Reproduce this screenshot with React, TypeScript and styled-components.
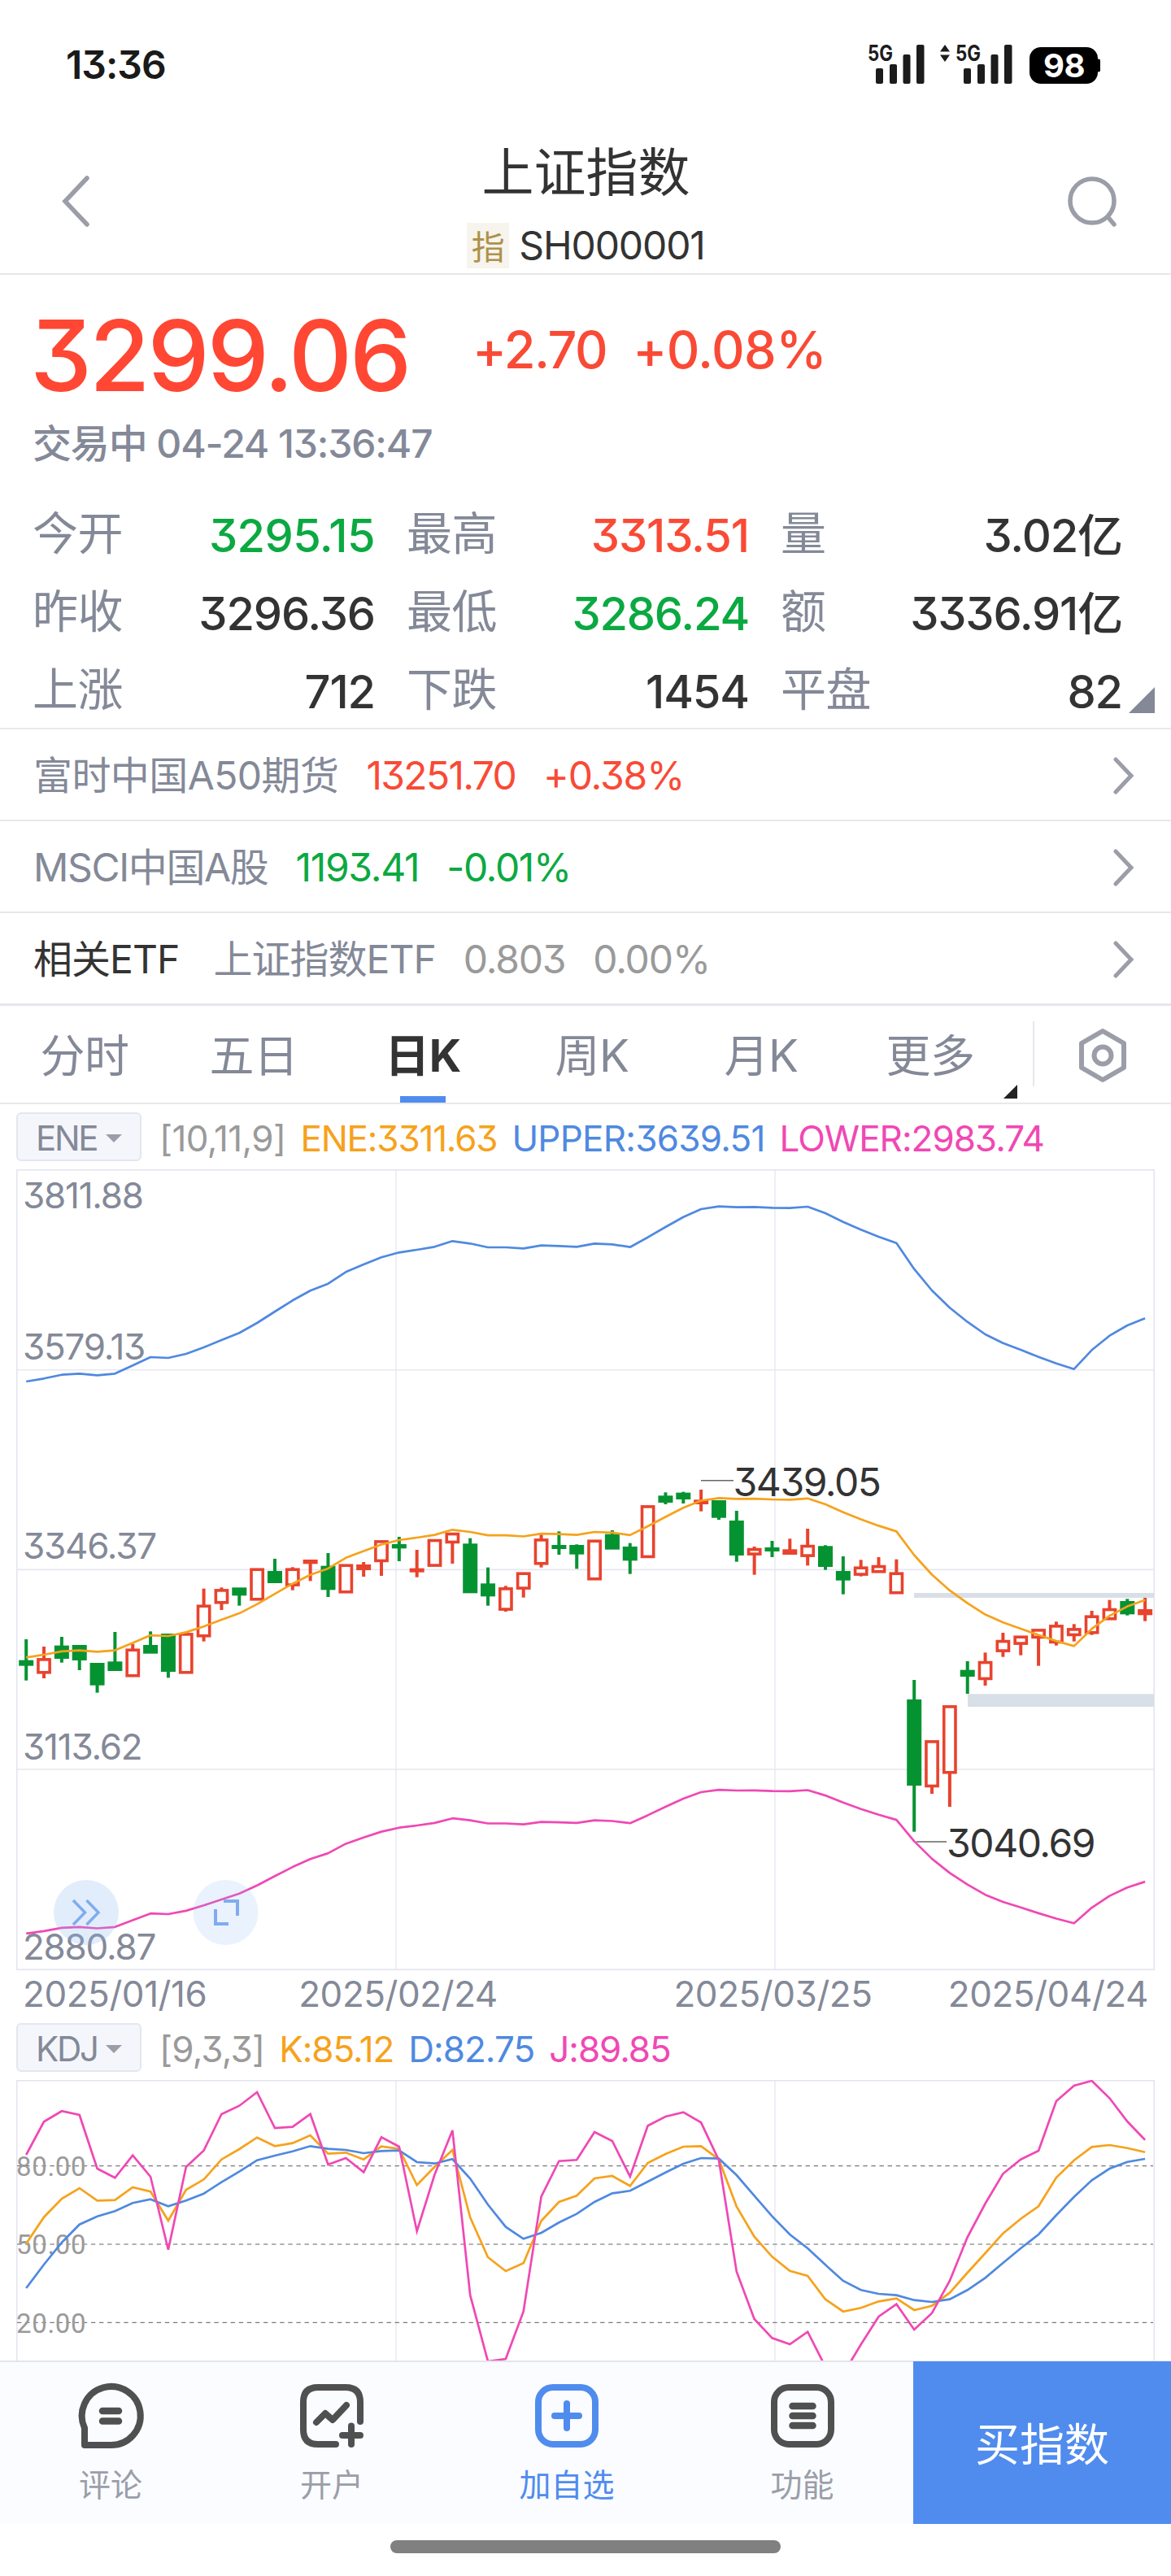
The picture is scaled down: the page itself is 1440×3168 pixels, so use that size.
import React from 'react';
import styled, { createGlobalStyle } from 'styled-components';

const GlobalStyle = createGlobalStyle`
  * { box-sizing: border-box; }
  body {
    margin: 0;
    background: #fff;
    color: #333;
    font-family: Inter, "Noto Sans CJK SC", sans-serif;
    font-feature-settings: "cv09" 1;
  }
`;

const RED = '#f94a36';
const GREEN = '#0ba941';
const MUTED = '#848998';
const ICON = '#9b9ea9';
const BLUE = '#508cee';
const LINE_BLUE = '#4f89e0';
const LINE_ORANGE = '#f6a21c';
const LINE_PINK = '#f048b4';
const CANDLE_RED = '#e8432e';
const CANDLE_GREEN = '#059332';

/* ---------- shared ---------- */

const Screen = styled.div`
  width: 1440px;
  height: 3168px;
  display: flex;
  flex-direction: column;
  overflow: hidden;
  background: #fff;
`;

const Txt = styled.span<{ $size: number; $color?: string; $weight?: number; $track?: number }>`
  font-size: ${(p) => p.$size}px;
  font-weight: ${(p) => p.$weight ?? 400};
  color: ${(p) => p.$color ?? '#333'};
  letter-spacing: ${(p) => p.$track ?? -0.02}em;
  white-space: nowrap;
`;

/* ---------- status bar ---------- */

const StatusBar = styled.div`
  height: 158px;
  padding: 0 80px 0 81px;
  display: flex;
  align-items: center;
  justify-content: space-between;
`;

const StatusIcons = styled.svg`
  width: 300px;
  height: 60px;
  display: block;
`;

const Signal = ({ x }: { x: number }) => (
  <g fill="#1c1c1c">
    <text x={x - 1} y={26} fontSize="27" fontWeight="700" textLength="31" lengthAdjust="spacingAndGlyphs">5G</text>
    <rect x={x + 9} y={35} width="9" height="19" rx="2" />
    <rect x={x + 26} y={30} width="9" height="24" rx="2" />
    <rect x={x + 42.5} y={18} width="9" height="36" rx="2" />
    <rect x={x + 59} y={6} width="9.5" height="48" rx="2" />
  </g>
);

/* ---------- title bar ---------- */

const TitleBar = styled.header`
  height: 180px;
  padding: 0 66px 0 76px;
  display: flex;
  align-items: center;
  justify-content: space-between;
  border-bottom: 2px solid #e7e8ea;
`;

const TitleStack = styled.div`
  display: flex;
  flex-direction: column;
  align-items: center;
  align-self: flex-start;
  padding: 12px 0 0 17px;
`;

const Title = styled.h1`
  margin: 0 0 20px;
  font-size: 64px;
  font-weight: 400;
  line-height: 84px;
`;

const CodeRow = styled.div`
  display: flex;
  align-items: center;
  gap: 12px;
  height: 56px;
  line-height: 54px;
`;

const Tag = styled.span`
  width: 52px;
  height: 56px;
  padding-top: 4px;
  display: grid;
  place-items: center;
  background: #f7f4ed;
  color: #ad924a;
  font-size: 41px;
  line-height: 52px;
`;

/* ---------- quote ---------- */

const Quote = styled.section`
  position: relative;
  height: 559px;
  padding: 29px 60px 0 40px;
  border-bottom: 2px solid #e7e8ea;
`;

const PriceRow = styled.div`
  display: flex;
  height: 140px;
  margin-left: -3px;
`;

const Price = styled.span`
  width: 467px;
  margin-right: 77px;
  font-size: 121px;
  font-weight: 500;
  line-height: 140px;
  letter-spacing: -0.0253em;
  color: #ff4733;
`;

const Change = styled(Txt)`
  line-height: 127px;
  margin-right: 32px;
`;

const Stamp = styled.div`
  height: 78px;
  margin-bottom: 23px;
  line-height: 78px;
  white-space: nowrap;
`;

const Stats = styled.div`
  display: grid;
  grid-template-columns: 421px 421px 420px;
  column-gap: 39px;
`;

const Stat = styled.div`
  height: 96px;
  display: flex;
  justify-content: space-between;
  line-height: 96px;
`;

const StatValue = styled(Txt)`
  padding-top: 3px;
`;

const ExpandCorner = styled.svg`
  position: absolute;
  right: 20px;
  bottom: 18px;
`;

/* ---------- related rows ---------- */

const LinkRow = styled.div<{ $strong?: boolean }>`
  height: ${(p) => (p.$strong ? 114 : 113)}px;
  padding: 2px 44px 0 41px;
  display: flex;
  align-items: center;
  gap: 34px;
  line-height: 60px;
  border-bottom: ${(p) => (p.$strong ? '3px solid #e5e7ef' : '2px solid #e7e8ea')};
`;

const Chevron = styled.svg`
  margin-left: auto;
`;

const Gapped = styled(Txt)`
  margin-right: 8px;
`;

/* ---------- period tabs ---------- */

const Tabs = styled.nav`
  height: 121px;
  display: flex;
  border-bottom: 2px solid #e7e8ea;
`;

const Tab = styled.div<{ $active?: boolean }>`
  position: relative;
  width: 208px;
  line-height: 122px;
  text-align: center;
  font-size: 55px;
  letter-spacing: -0.01em;
  font-weight: ${(p) => (p.$active ? 700 : 400)};
  color: ${(p) => (p.$active ? '#333' : MUTED)};
  &::after {
    content: '';
    display: ${(p) => (p.$active ? 'block' : 'none')};
    position: absolute;
    left: 76px;
    bottom: 0;
    width: 56px;
    height: 8px;
    background: ${BLUE};
  }
`;

const MoreCorner = styled.svg`
  position: absolute;
  right: -3px;
  bottom: 5px;
`;

const TabDivider = styled.div`
  width: 2px;
  height: 80px;
  margin: 19px 0 0 22px;
  background: #e6e7ee;
`;

const SettingsIcon = styled.svg`
  margin: 26px 0 0 52px;
`;

/* ---------- indicators ---------- */

const IndicatorBar = styled.div<{ $height: number; $top: number }>`
  height: ${(p) => p.$height}px;
  padding: ${(p) => p.$top}px 0 0 20px;
  display: flex;
  align-items: flex-start;
  gap: 18px;
  line-height: 64px;
`;

const Picker = styled.div`
  width: 154px;
  height: 60px;
  margin-right: 4px;
  padding: 3px 22px 0 22px;
  display: flex;
  align-items: center;
  justify-content: space-between;
  background: #f5f6fb;
  border: 2px solid #e4e6f0;
  border-radius: 6px;
  line-height: 54px;
`;

const Caret = () => (
  <svg width="20" height="10" viewBox="0 0 20 10"><path d="M0 0H20L10 10Z" fill={ICON} /></svg>
);

const ChartSvg = styled.svg`
  display: block;
  flex: none;
  .axis { font-size: 44px; letter-spacing: -0.028em; fill: ${MUTED}; }
  .date { font-size: 44px; letter-spacing: -0.01em; fill: ${MUTED}; }
  .mark { font-size: 48px; letter-spacing: -0.03em; fill: #333; }
  .level { font-family: Roboto, sans-serif; font-size: 33px; letter-spacing: 0.02em; fill: #9a9a9a; }
`;

/* ---------- chart data ---------- */

const X0 = 32.2;
const STEP = 21.84;
const xAt = (i: number) => X0 + i * STEP;
const TOP_PRICE = 3811.88;
const PX_PER_POINT = 1.0566;

// Upper envelope, in thirds of a pixel below the top of the plot.
const UPPER = [777, 766, 752, 748, 754, 748, 718, 687, 690, 675, 651, 624, 598, 561, 519, 478, 442, 416, 373, 345, 319, 301,
  291, 280, 259, 268, 282, 282, 286, 275, 277, 280, 268, 271, 281, 245, 207, 170, 141, 131, 134, 133, 136, 137, 132, 156, 188,
  217, 243, 266, 362, 441, 505, 557, 603, 635, 660, 686, 710, 731, 661, 608, 570, 544];
const upperPrice = UPPER.map((v) => TOP_PRICE - (v / 3 + 1.5) / PX_PER_POINT);
const priceY = (p: number) => 0.5 + (TOP_PRICE - p) * PX_PER_POINT;
const path = (ys: number[]) => ys.map((y, i) => `${i ? 'L' : 'M'}${xAt(i).toFixed(1)} ${y.toFixed(1)}`).join('');
const envelope = (k: number) => path(upperPrice.map((p) => priceY((p * k) / 1.11)));

// kind, high, body top, body bottom, low
type Candle = [string, number, number, number, number];
const CANDLES: Candle[] = [
  ['g', 708, 785, 806, 860], ['r', 735, 777, 836, 852], ['g', 699, 731, 780, 794], ['g', 729, 729, 786, 822],
  ['g', 795, 795, 878, 905], ['g', 681, 790, 825, 825], ['r', 725, 742, 848, 848], ['g', 679, 729, 761, 761],
  ['g', 687, 687, 828, 850], ['r', 684, 684, 836, 836], ['r', 521, 580, 701, 716], ['r', 517, 522, 578, 600],
  ['g', 517, 517, 547, 584], ['r', 445, 445, 566, 566], ['g', 411, 456, 501, 501], ['r', 442, 445, 513, 527],
  ['s', 414, 414, 430, 493], ['g', 390, 437, 526, 552], ['r', 430, 430, 539, 539], ['s', 423, 432, 453, 477],
  ['r', 342, 342, 424, 474], ['g', 330, 357, 373, 420], ['s', 378, 446, 461, 479], ['r', 338, 338, 441, 441],
  ['r', 314, 314, 355, 429], ['g', 335, 355, 538, 538], ['g', 443, 502, 550, 584], ['r', 511, 516, 603, 606],
  ['r', 460, 460, 525, 554], ['r', 320, 336, 434, 443], ['g', 310, 360, 375, 396], ['g', 358, 360, 395, 448],
  ['r', 340, 340, 491, 491], ['g', 306, 320, 377, 377], ['g', 353, 366, 418, 467], ['r', 213, 213, 409, 409],
  ['g', 166, 178, 204, 210], ['g', 164, 167, 192, 207], ['s', 156, 193, 210, 236], ['g', 195, 195, 260, 267],
  ['g', 234, 270, 399, 422], ['r', 366, 371, 399, 470], ['g', 345, 369, 384, 405], ['s', 337, 376, 396, 396],
  ['r', 300, 359, 405, 436], ['g', 361, 364, 441, 452], ['g', 402, 456, 491, 542], ['r', 415, 439, 474, 476],
  ['r', 405, 434, 464, 464], ['r', 413, 460, 542, 542], ['g', 858, 930, 1248, 1418], ['r', 1080, 1080, 1255, 1278],
  ['r', 951, 951, 1205, 1326], ['g', 789, 821, 846, 909], ['r', 757, 788, 859, 879], ['r', 684, 710, 756, 773],
  ['r', 694, 694, 729, 767], ['r', 669, 669, 706, 806], ['r', 643, 654, 724, 731], ['r', 652, 666, 697, 716],
  ['r', 603, 619, 689, 692], ['r', 563, 593, 638, 638], ['g', 559, 567, 616, 620], ['s', 555, 597, 619, 641],
];
const candleY = (v: number) => v / 3 + 342;

const J = [330, 208, 169, 183, 381, 415, 332, 411, 680, 375, 314, 180, 149, 99, 231, 227, 180, 366, 342, 394, 265, 300, 612,
  403, 240, 848, 1092, 1083, 908, 484, 353, 349, 246, 279, 410, 223, 189, 173, 211, 350, 761, 936, 1006, 1029, 983, 1112, 1139,
  1030, 927, 881, 975, 914, 795, 634, 510, 400, 347, 315, 132, 75, 57, 121, 207, 275];
const K = [658, 560, 492, 453, 499, 497, 450, 466, 573, 459, 421, 347, 309, 266, 298, 287, 258, 326, 322, 347, 299, 308, 442,
  374, 312, 561, 708, 759, 730, 574, 504, 481, 417, 408, 445, 360, 327, 300, 298, 347, 521, 632, 706, 758, 777, 863, 908, 895,
  871, 860, 903, 887, 839, 765, 693, 620, 566, 520, 414, 350, 301, 294, 305, 320];
const D = [822, 735, 654, 587, 557, 538, 508, 494, 520, 499, 473, 431, 392, 350, 333, 317, 298, 308, 312, 324, 316, 314, 357,
  362, 346, 418, 514, 596, 640, 618, 580, 548, 504, 472, 463, 429, 395, 363, 342, 344, 405, 481, 557, 624, 675, 736, 795, 829,
  843, 848, 866, 873, 863, 829, 784, 729, 675, 624, 553, 485, 424, 381, 356, 345];
const kdjPath = (vs: number[]) => path(vs.map((v) => v / 3 - 18));

const CandleMark = ({ c, i }: { c: Candle; i: number }) => {
  const [kind, hi, top, bottom, lo] = c;
  const x = xAt(i);
  const color = kind === 'g' ? CANDLE_GREEN : CANDLE_RED;
  const [yh, yt, yb, yl] = [hi, top, bottom, lo].map(candleY);
  return (
    <g>
      {yt > yh && <rect x={x - 2} y={yh} width="4" height={yt - yh + 1} fill={color} />}
      {yl > yb && <rect x={x - 2} y={yb - 1} width="4" height={yl - yb + 1} fill={color} />}
      {kind === 'r'
        ? <rect x={x - 7.1} y={yt + 1.9} width="14.2" height={Math.max(yb - yt - 3.8, 1)} fill="#fff" stroke={color} strokeWidth="3.6" />
        : <rect x={x - 9} y={yt} width="18" height={yb - yt} fill={color} />}
    </g>
  );
};

const MainChart = () => (
  <ChartSvg width="1440" height="1044" viewBox="0 0 1440 1044">
    <g fill="none" strokeWidth="1.6">
      <path d="M487 1V984M953 1V984" stroke="#eeeef5" strokeWidth="2.2" />
      <path d="M21 246.7H1419M21 492.4H1419M21 738H1419" stroke="#e8e8f1" />
      <rect x="20.8" y="0.8" width="1398.4" height="983.4" stroke="#e4e4f0" />
    </g>
    <rect x="1124" y="521" width="295" height="6" fill="#d8dfe7" />
    <rect x="1190" y="645.3" width="229" height="15.7" fill="#d8dfe7" />
    <g className="axis">
      <text x="28" y="47.7">3811.88</text>
      <text x="28" y="234.3">3579.13</text>
      <text x="28" y="479.3">3346.37</text>
      <text x="28" y="725.5">3113.62</text>
      <text x="28" y="971.5">2880.87</text>
    </g>
    {CANDLES.map((c, i) => <CandleMark key={i} c={c} i={i} />)}
    <g fill="none" strokeWidth="2.7" strokeLinejoin="round">
      <path d={envelope(1.11)} stroke={LINE_BLUE} />
      <path d={envelope(1.01)} stroke={LINE_ORANGE} />
      <path d={envelope(0.91)} stroke={LINE_PINK} />
    </g>
    <path d="M862 382.7H902M1127 827H1164" stroke="#666" strokeWidth="1.4" />
    <text className="mark" x="901.5" y="401.7">3439.05</text>
    <text className="mark" x="1164" y="846">3040.69</text>
    <g>
      <circle cx="106" cy="914" r="40" fill="#8cb8f3" fillOpacity="0.25" />
      <circle cx="277.6" cy="914" r="40" fill="#8cb8f3" fillOpacity="0.18" />
      <g fill="none" stroke="#80acef" strokeWidth="3.5">
        <path d="M90 899L104.5 914L90 929M106.5 899L121 914L106.5 929" />
        <path d="M275 900H292V918M265 910V928H281" strokeWidth="4" />
      </g>
    </g>
    <g className="date">
      <text x="28" y="1029.5">2025/01/16</text>
      <text x="489.5" y="1029.5" textAnchor="middle">2025/02/24</text>
      <text x="950.5" y="1029.5" textAnchor="middle">2025/03/25</text>
      <text x="1412" y="1029.5" textAnchor="end">2025/04/24</text>
    </g>
  </ChartSvg>
);

const KdjChart = () => (
  <ChartSvg width="1440" height="345" viewBox="0 0 1440 345">
    <path d="M487 1V345M953 1V345" stroke="#eeeef5" strokeWidth="2.2" />
    <path d="M20.8 345V0.8H1419.2V345" fill="none" stroke="#e4e4f0" strokeWidth="1.6" />
    <g fill="none" strokeDasharray="5.4 4.7">
      <path d="M21 105.6H1418" stroke="#7a7a7a" strokeWidth="1.3" />
      <path d="M21 202H1418" stroke="#b2b2b2" strokeWidth="2" />
      <path d="M21 298.4H1418" stroke="#7a7a7a" strokeWidth="1.3" />
    </g>
    <g className="level">
      <text x="20" y="118">80.00</text>
      <text x="20" y="214">50.00</text>
      <text x="20" y="311">20.00</text>
    </g>
    <g fill="none" strokeWidth="2.7" strokeLinejoin="miter">
      <path d={kdjPath(K)} stroke={LINE_ORANGE} />
      <path d={kdjPath(D)} stroke={LINE_BLUE} />
      <path d={kdjPath(J)} stroke={LINE_PINK} />
    </g>
  </ChartSvg>
);

/* ---------- bottom bar ---------- */

const BottomBar = styled.footer`
  height: 201px;
  flex: none;
  display: flex;
  background: #fafcff;
  border-top: 2px solid #e4e4ec;
`;

const Action = styled.div<{ $width: number; $on?: boolean }>`
  width: ${(p) => p.$width}px;
  padding-top: 22px;
  display: flex;
  flex-direction: column;
  align-items: center;
  gap: 16px;
  font-size: 39px;
  line-height: 50px;
  color: ${(p) => (p.$on ? BLUE : ICON)};
`;

const ActionIcon = styled.svg<{ $on?: boolean }>`
  width: 88px;
  height: 88px;
  fill: none;
  stroke: ${(p) => (p.$on ? BLUE : '#505050')};
  stroke-width: 8;
  stroke-linecap: round;
  stroke-linejoin: round;
`;

const BuyButton = styled.button`
  flex: 1;
  margin-top: -1px;
  padding: 2px 0 0;
  border: 0;
  background: ${BLUE};
  color: #fff;
  font: 400 55px/200px Inter, "Noto Sans CJK SC", sans-serif;
`;

const HomeArea = styled.div`
  flex: 1;
  display: flex;
  justify-content: center;
  padding-top: 20px;
`;

const HomePill = styled.div`
  width: 480px;
  height: 16px;
  border-radius: 8px;
  background: #808080;
`;

const RowChevron = () => (
  <Chevron width="28" height="46" viewBox="0 0 28 46">
    <path d="M4 3L23 23L4 43" fill="none" stroke={ICON} strokeWidth="5" strokeLinecap="round" />
  </Chevron>
);

type StatItem = { label: string; value: string; color?: string; track?: number };
const STATS: StatItem[] = [
  { label: '今开', value: '3295.15', color: GREEN, track: -0.0104 },
  { label: '最高', value: '3313.51', color: RED, track: -0.0197 },
  { label: '量', value: '3.02亿' },
  { label: '昨收', value: '3296.36' },
  { label: '最低', value: '3286.24', color: GREEN, track: -0.021 },
  { label: '额', value: '3336.91亿', track: -0.021 },
  { label: '上涨', value: '712' },
  { label: '下跌', value: '1454' },
  { label: '平盘', value: '82' },
];

const TABS = ['分时', '五日', '日K', '周K', '月K', '更多'];

export default function App() {
  return (
    <Screen>
      <GlobalStyle />
      <StatusBar>
        <Txt $size={48} $weight={600} $color="#1a1a1a">13:36</Txt>
        <StatusIcons viewBox="0 0 300 60">
          <Signal x={8} />
          <path d="M96 14.5L102 6L108 14.5ZM96 18.5L102 27L108 18.5Z" fill="#1c1c1c" />
          <Signal x={116} />
          <rect x="206" y="9" width="84" height="45" rx="14" fill="#000" />
          <rect x="289" y="23.5" width="4" height="16" rx="2" fill="#000" />
          <text x="248.5" y="46.3" fontSize="40" fontWeight="700" fill="#fff" textAnchor="middle" letterSpacing="-0.5">98</text>
        </StatusIcons>
      </StatusBar>

      <TitleBar>
        <svg width="36" height="66" viewBox="0 0 36 66">
          <path d="M31 5L4 33.5L31 62" fill="none" stroke={ICON} strokeWidth="5.5" strokeLinecap="round" />
        </svg>
        <TitleStack>
          <Title>上证指数</Title>
          <CodeRow>
            <Tag>指</Tag>
            <Txt $size={48} $track={-0.0235}>SH000001</Txt>
          </CodeRow>
        </TitleStack>
        <svg width="62" height="66" viewBox="0 0 62 66">
          <g fill="none" stroke={ICON} strokeWidth="5.5" strokeLinecap="round">
            <circle cx="31" cy="33" r="27" />
            <path d="M50.5 53L58 62" />
          </g>
        </svg>
      </TitleBar>

      <Quote>
        <PriceRow>
          <Price>3299.06</Price>
          <Change $size={63} $weight={500} $color={RED} $track={-0.0237}>+2.70</Change>
          <Change $size={63} $weight={500} $color={RED} $track={-0.0088}>+0.08%</Change>
        </PriceRow>
        <Stamp>
          <Txt $size={48} $weight={500} $color={MUTED} $track={-0.0235}>交易中 04-24 13:36:47</Txt>
        </Stamp>
        <Stats>
          {STATS.map((s) => (
            <Stat key={s.label}>
              <Txt $size={56} $color={MUTED} $track={-0.01}>{s.label}</Txt>
              <StatValue $size={56} $weight={500} $color={s.color} $track={s.track}>{s.value}</StatValue>
            </Stat>
          ))}
        </Stats>
        <ExpandCorner width="32" height="32" viewBox="0 0 32 32"><path d="M32 0V32H0Z" fill={MUTED} /></ExpandCorner>
      </Quote>

      <LinkRow>
        <Txt $size={48} $color={MUTED} $track={-0.012}>富时中国A50期货</Txt>
        <Txt $size={48} $color={RED} $track={-0.035}>13251.70</Txt>
        <Txt $size={48} $color={RED} $track={-0.024}>+0.38%</Txt>
        <RowChevron />
      </LinkRow>
      <LinkRow>
        <Txt $size={48} $color={MUTED} $track={-0.028}>MSCI中国A股</Txt>
        <Txt $size={48} $color={GREEN} $track={-0.0275}>1193.41</Txt>
        <Txt $size={48} $color={GREEN} $track={-0.028}>-0.01%</Txt>
        <RowChevron />
      </LinkRow>
      <LinkRow $strong>
        <Gapped $size={48}>相关ETF</Gapped>
        <Txt $size={48} $color={MUTED}>上证指数ETF</Txt>
        <Txt $size={48} $color="#9a9a9a" $track={-0.0256}>0.803</Txt>
        <Txt $size={48} $color="#9a9a9a" $track={-0.024}>0.00%</Txt>
        <RowChevron />
      </LinkRow>

      <Tabs>
        {TABS.map((t) => (
          <Tab key={t} $active={t === '日K'}>
            {t}
            {t === '更多' && (
              <MoreCorner width="17" height="17" viewBox="0 0 17 17"><path d="M17 0V17H0Z" fill="#222" /></MoreCorner>
            )}
          </Tab>
        ))}
        <TabDivider />
        <SettingsIcon width="64" height="70" viewBox="0 0 64 70">
          <g fill="none" stroke={ICON} strokeWidth="6" strokeLinejoin="round">
            <path d="M32 5L58 20V50L32 65L6 50V20Z" />
            <circle cx="32" cy="35" r="10.5" />
          </g>
        </SettingsIcon>
      </Tabs>

      <IndicatorBar $height={80} $top={10}>
        <Picker><Txt $size={42} $color={MUTED} $track={-0.055}>ENE</Txt><Caret /></Picker>
        <Txt $size={44} $color="#9a9a9a" $track={-0.014}>[10,11,9]</Txt>
        <Txt $size={44} $color={LINE_ORANGE} $track={-0.0274}>ENE:3311.63</Txt>
        <Txt $size={44} $color={LINE_BLUE} $track={-0.0174}>UPPER:3639.51</Txt>
        <Txt $size={44} $color={LINE_PINK} $track={-0.0229}>LOWER:2983.74</Txt>
      </IndicatorBar>
      <MainChart />
      <IndicatorBar $height={76} $top={6}>
        <Picker><Txt $size={42} $color={MUTED} $track={-0.055}>KDJ</Txt><Caret /></Picker>
        <Txt $size={44} $color="#9a9a9a" $track={-0.018}>[9,3,3]</Txt>
        <Txt $size={44} $color={LINE_ORANGE} $track={-0.025}>K:85.12</Txt>
        <Txt $size={44} $color={LINE_BLUE} $track={-0.022}>D:82.75</Txt>
        <Txt $size={44} $color={LINE_PINK} $track={-0.024}>J:89.85</Txt>
      </IndicatorBar>
      <KdjChart />

      <BottomBar>
        <Action $width={272}>
          <ActionIcon viewBox="0 0 88 88">
            <path d="M12 80V59A36 36 0 1 1 44 80Z" />
            <path d="M34 38H54M34 50.5H54" strokeWidth="8.5" />
          </ActionIcon>
          评论
        </Action>
        <Action $width={272}>
          <ActionIcon viewBox="0 0 88 88">
            <path d="M79 51V27Q79 9 61 9H27Q9 9 9 27V61Q9 79 27 79H49" />
            <path d="M25 52L36 41L45 49L62 31" />
            <path d="M68 56.5V79M57 68H79" />
          </ActionIcon>
          开户
        </Action>
        <Action $width={306} $on>
          <ActionIcon $on viewBox="0 0 88 88">
            <rect x="9" y="9" width="70" height="70" rx="18" />
            <path d="M44 29V59M29 44H59" />
          </ActionIcon>
          加自选
        </Action>
        <Action $width={273}>
          <ActionIcon viewBox="0 0 88 88">
            <rect x="9" y="9" width="70" height="70" rx="18" />
            <path d="M31.5 32H56.5M31.5 44H56.5M31.5 56H56.5" strokeWidth="8.5" />
          </ActionIcon>
          功能
        </Action>
        <BuyButton>买指数</BuyButton>
      </BottomBar>
      <HomeArea><HomePill /></HomeArea>
    </Screen>
  );
}
